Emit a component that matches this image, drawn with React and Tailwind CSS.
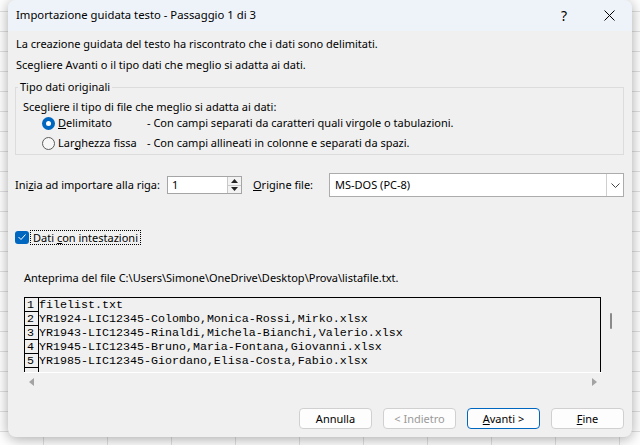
import React from "react";

const ROWS = [
  "filelist.txt",
  "YR1924-LIC12345-Colombo,Monica-Rossi,Mirko.xlsx",
  "YR1943-LIC12345-Rinaldi,Michela-Bianchi,Valerio.xlsx",
  "YR1945-LIC12345-Bruno,Maria-Fontana,Giovanni.xlsx",
  "YR1985-LIC12345-Giordano,Elisa-Costa,Fabio.xlsx",
];

function SheetGrid() {
  const cells = [];
  for (let r = 0; r < 23; r++) {
    for (let c = 0; c < 11; c++) {
      cells.push(<div key={`${r}-${c}`} className="border-r border-b border-[#e1e1e1]" />);
    }
  }
  return (
    <div className="grid h-full w-full grid-cols-[44px_repeat(10,64px)] grid-rows-[12px_repeat(22,20px)]">
      {cells}
    </div>
  );
}

function Radio({ checked }) {
  return checked ? (
    <span className="flex h-[13px] w-[13px] items-center justify-center rounded-full bg-[#0067c0]">
      <span className="h-[5px] w-[5px] rounded-full bg-white" />
    </span>
  ) : (
    <span className="h-[13px] w-[13px] rounded-full border border-[#5c5c5c] bg-[#f7f7f7]" />
  );
}

function Button({ children, primary, disabled }) {
  return (
    <button
      className={
        "h-[21px] w-[73px] rounded-[4px] border bg-[#fdfdfd] text-[11px] leading-none " +
        (primary ? "border-[#0067c0] " : "border-[#d0d0d0] ") +
        (disabled ? "text-[#9a9a9a]" : "text-black")
      }
    >
      {children}
    </button>
  );
}

export default function App() {
  return (
    <div className="relative h-[445px] w-[640px] overflow-hidden bg-white font-['Noto_Sans',sans-serif]">
      <SheetGrid />

      <div className="absolute left-[8px] top-0 flex h-[437px] w-[624px] flex-col overflow-hidden rounded-[8px] bg-[#f0f0f0] text-[11px] text-black shadow-[0_2px_14px_rgba(0,0,0,0.35)]">
        {/* title bar */}
        <div className="flex h-[31px] items-center bg-[#eef3f9] pl-[8px] text-[11.3px]">
          <span className="flex-1">Importazione guidata testo - Passaggio 1 di 3</span>
          <span className="w-[20px] text-center text-[14px]">?</span>
          <span className="ml-[25px] mr-[13px] flex w-[20px] justify-center">
            <svg width="11" height="11" viewBox="0 0 11 11">
              <path d="M0.5 0.5L10.5 10.5M10.5 0.5L0.5 10.5" stroke="#000" strokeWidth="1" />
            </svg>
          </span>
        </div>

        <div className="flex flex-1 flex-col pl-[7px] pr-[8px]">
          <p className="mt-[3px] h-[20px] pl-[1px] leading-[20px]">
            La creazione guidata del testo ha riscontrato che i dati sono delimitati.
          </p>
          <p className="mt-[1px] h-[20px] pl-[1px] leading-[20px]">
            Scegliere Avanti o il tipo dati che meglio si adatta ai dati.
          </p>

          <fieldset className="mt-[4px] border border-[#dcdcdc] pb-[3px] pl-[7px]">
            <legend className="-ml-[5px] px-[2px] leading-[16px]">Tipo dati originali</legend>
            <p className="mt-[4px] h-[16px] leading-[16px]">
              Scegliere il tipo di file che meglio si adatta ai dati:
            </p>
            <div className="flex h-[16px] items-center pl-[19px]">
              <Radio checked />
              <span className="ml-[3px] w-[89px]">
                <u>D</u>elimitato
              </span>
              <span>- Con campi separati da caratteri quali virgole o tabulazioni.</span>
            </div>
            <div className="mt-[4px] flex h-[16px] items-center pl-[19px]">
              <Radio />
              <span className="ml-[3px] w-[89px]">
                Lar<u>g</u>hezza fissa
              </span>
              <span>- Con campi allineati in colonne e separati da spazi.</span>
            </div>
          </fieldset>

          <div className="mt-[18px] flex h-[24px] items-center">
            <span className="w-[152px] whitespace-nowrap">
              Ini<u>z</u>ia ad importare alla riga:
            </span>
            <div className="flex h-[18px] w-[75px] border border-[#a5a5a5] bg-white">
              <span className="flex-1 pl-[4px] leading-[16px]">1</span>
              <div className="flex w-[14px] flex-col border-l border-[#c8c8c8]">
                <div className="flex flex-1 items-center justify-center border-b border-[#c8c8c8] bg-[#f3f3f3]">
                  <svg width="7" height="4" viewBox="0 0 7 4"><path d="M3.5 0L7 4H0Z" fill="#222" /></svg>
                </div>
                <div className="flex flex-1 items-center justify-center bg-[#f3f3f3]">
                  <svg width="7" height="4" viewBox="0 0 7 4"><path d="M0 0H7L3.5 4Z" fill="#222" /></svg>
                </div>
              </div>
            </div>
            <span className="ml-[11px] w-[76px] whitespace-nowrap">
              <u>O</u>rigine file:
            </span>
            <div className="flex h-[24px] flex-1 border border-[#acacac] bg-white">
              <span className="flex-1 pl-[5px] leading-[22px]">MS-DOS (PC-8)</span>
              <div className="flex w-[17px] items-center justify-center border-l border-[#cfcfcf]">
                <svg width="9" height="5" viewBox="0 0 9 5">
                  <path d="M0.5 0.5L4.5 4.5L8.5 0.5" stroke="#444" fill="none" strokeWidth="1" />
                </svg>
              </div>
            </div>
          </div>

          <div className="mt-[32px] flex h-[16px] items-center">
            <span className="flex h-[13px] w-[14px] items-center justify-center rounded-[3px] bg-[#0067c0]">
              <svg width="8" height="6" viewBox="0 0 8 6">
                <path d="M0.5 3L3 5.5L7.5 0.5" stroke="#fff" fill="none" strokeWidth="1" />
              </svg>
            </span>
            <span className="ml-[1px] border border-dotted border-black px-[2px] leading-[13px]">
              Dati <u>c</u>on intestazioni
            </span>
          </div>

          <p className="mt-[25px] h-[16px] pl-[9px] leading-[16px]">
            Anteprima del file C:\Users\Simone\OneDrive\Desktop\Prova\listafile.txt.
          </p>

          <div className="ml-[9px] mt-[11px] flex flex-col">
            <div className="flex">
              <div className="h-[75px] w-[577px] overflow-hidden border-t border-r border-l border-black font-['Liberation_Mono','Courier_New',monospace] text-[11.67px] leading-[14px]">
                {[...ROWS, ""].map((row, i) => (
                  <div key={i} className="flex h-[14px]">
                    <span className="w-[14px] shrink-0 border-r border-b border-black pl-[2px]">
                      {row ? i + 1 : ""}
                    </span>
                    <span className="whitespace-pre">{row}</span>
                  </div>
                ))}
              </div>
              <div className="flex flex-1 justify-center pt-[16px]">
                <div className="ml-[-4px] h-[16px] w-[2px] rounded-full bg-[#8a8a8a]" />
              </div>
            </div>
            <div className="flex h-[18px] w-[578px] items-center justify-between border-t border-white px-[5px]">
              <svg width="5" height="8" viewBox="0 0 5 8"><path d="M5 0V8L0 4Z" fill="#a3a3a3" /></svg>
              <svg width="5" height="8" viewBox="0 0 5 8"><path d="M0 0V8L5 4Z" fill="#a3a3a3" /></svg>
            </div>
          </div>

          <div className="mt-[18px] flex justify-end gap-[11px]">
            <Button>Annulla</Button>
            <Button disabled>&lt; Indietro</Button>
            <Button primary>
              <u>A</u>vanti &gt;
            </Button>
            <Button>
              <u>F</u>ine
            </Button>
          </div>
        </div>
      </div>
    </div>
  );
}
